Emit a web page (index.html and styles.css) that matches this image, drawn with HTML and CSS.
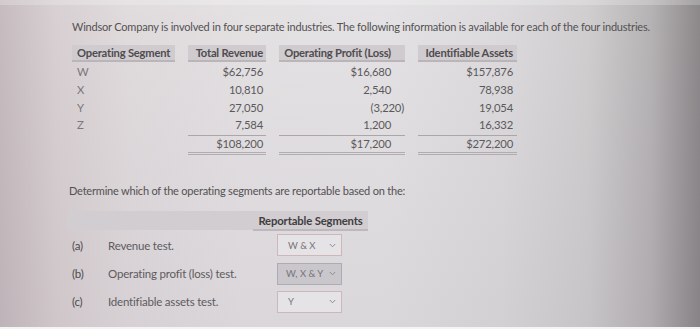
FILE: index.html
```html
<!DOCTYPE html>
<html>
<head>
<meta charset="utf-8">
<link rel="stylesheet" href="styles.css">
</head>
<body>
<div class="page">
  <div class="topstrip"></div>
  <p class="intro">Windsor Company is involved in four separate industries. The following information is available for each of the four industries.</p>

  <div class="data">
    <div class="hd c1 left">Operating Segment</div>
    <div class="hd c2">Total Revenue</div>
    <div class="hd c3">Operating Profit (Loss)</div>
    <div class="hd c4">Identifiable Assets</div>

    <div class="cell c1 left seg">W</div>
    <div class="cell c2">$62,756</div>
    <div class="cell c3">$16,680</div>
    <div class="cell c4">$157,876</div>

    <div class="cell c1 left seg">X</div>
    <div class="cell c2">10,810</div>
    <div class="cell c3">2,540</div>
    <div class="cell c4">78,938</div>

    <div class="cell c1 left seg">Y</div>
    <div class="cell c2">27,050</div>
    <div class="cell c3 neg">(3,220)</div>
    <div class="cell c4">19,054</div>

    <div class="cell c1 left seg">Z</div>
    <div class="cell c2">7,584</div>
    <div class="cell c3">1,200</div>
    <div class="cell c4">16,332</div>

    <div class="cell c1 blank"></div>
    <div class="cell c2 total">$108,200</div>
    <div class="cell c3 total">$17,200</div>
    <div class="cell c4 total">$272,200</div>
  </div>

  <p class="prompt">Determine which of the operating segments are reportable based on the:</p>

  <div class="answers">
    <div class="ahd-left"></div>
    <div class="ahd-right">Reportable Segments</div>

    <div class="q"><span class="lbl">(a)</span><span>Revenue test.</span></div>
    <div class="a"><div class="sel"><span>W &amp; X</span><svg class="chev" width="7" height="5" viewBox="0 0 7 5"><polyline points="0.8,1 3.5,3.8 6.2,1" fill="none" stroke="#8f8c90" stroke-width="1"/></svg></div></div>

    <div class="q"><span class="lbl">(b)</span><span>Operating profit (loss) test.</span></div>
    <div class="a"><div class="sel filled"><span>W, X &amp; Y</span><svg class="chev" width="7" height="5" viewBox="0 0 7 5"><polyline points="0.8,1 3.5,3.8 6.2,1" fill="none" stroke="#8f8c90" stroke-width="1"/></svg></div></div>

    <div class="q"><span class="lbl">(c)</span><span>Identifiable assets test.</span></div>
    <div class="a"><div class="sel"><span>Y</span><svg class="chev" width="7" height="5" viewBox="0 0 7 5"><polyline points="0.8,1 3.5,3.8 6.2,1" fill="none" stroke="#8f8c90" stroke-width="1"/></svg></div></div>
  </div>
</div>
</body>
</html>
```

FILE: styles.css
```css
html, body {
  margin: 0;
  padding: 0;
  height: 329px;
  overflow: hidden;
}
body {
  font-family: Lato, "Open Sans", sans-serif;
  color: #5b595b;
  background:
    linear-gradient(to bottom, rgba(0,0,0,0) 0%, rgba(60,40,70,0.06) 100%),
    linear-gradient(to right, #c6bcbf 0%, #d8d0d2 8%, #e0dbdd 18%, #e4e1e3 35%, #e4e2e4 55%, #dcdadc 72%, #d0cecf 84%, #b6b3b5 93%, #8c888a 100%);
}
.page {
  height: 327px;
  border-bottom: 2px solid #f4f4f4;
}
.topstrip {
  height: 5px;
  background: rgba(255,255,255,0.22);
}
.intro {
  margin: 14px 0 0 72px;
  font-size: 11px;
  line-height: 15px;
  letter-spacing: -0.2px;
  color: #535153;
  white-space: nowrap;
}
.data {
  margin: 11px 0 0 72px;
  display: grid;
  grid-template-columns: 103px 78px 126px 99px;
  grid-template-rows: 18px;
  grid-auto-rows: 17.8px;
  column-gap: 13px;
  font-size: 11.3px;
  width: max-content;
}
.hd {
  height: 15px;
  line-height: 15px;
  background: #d0cbce;
  border-bottom: 2px solid #b9b5b8;
  font-weight: 700;
  color: #4e4c4e;
  text-align: right;
  letter-spacing: -0.2px;
  font-size: 11.2px;
  white-space: nowrap;
}
.cell {
  text-align: right;
  line-height: 17.8px;
  letter-spacing: -0.2px;
}
.left { text-align: left; padding-left: 5px; }
.seg { color: #7a777a; }
.c2 { padding-right: 3px; }
.c3 { padding-right: 14px; }
.c3.neg { padding-right: 1px; }
.c4 { padding-right: 4px; }
.total {
  border-top: 1px solid #aaa6a9;
  border-bottom: 3px double #b0acaf;
  line-height: 16px;
  margin-top: 1px;
  height: 16px;
}
.prompt {
  margin: 31px 0 0 69px;
  font-size: 11px;
  line-height: 15px;
  letter-spacing: -0.2px;
  color: #535153;
}
.answers {
  margin: 13px 0 0 68px;
  display: grid;
  grid-template-columns: 185px 112px;
  grid-template-rows: 20px 28.4px 28.4px 28.4px;
  width: max-content;
  font-size: 11.5px;
}
.ahd-left {
  background: #d2cdd0;
  margin-bottom: 1px;
}
.ahd-right {
  background: #d2cdd0;
  border-bottom: 2px solid #bcb8bb;
  font-weight: 700;
  color: #3f3d40;
  text-align: center;
  height: 18px;
  line-height: 19px;
  font-size: 11.3px;
  letter-spacing: -0.15px;
  white-space: nowrap;
  margin-right: -3px;
}
.q {
  display: flex;
  align-items: center;
  padding-left: 4px;
  color: #5e5b5e;
  letter-spacing: -0.2px;
}
.lbl {
  width: 36px;
  color: #4c4a4c;
}
.a {
  display: flex;
  align-items: center;
  justify-content: center;
}
.sel {
  height: 20px;
  border: 1px solid #cdb7bb;
  background: #e6e3e6;
  display: flex;
  align-items: center;
  justify-content: space-between;
  padding: 0 5px 0 10px;
  width: 48px;
  font-size: 9.5px;
  color: #777478;
  margin-left: 1px;
}
.sel.filled {
  background: #c9c6cc;
  border-color: #aeabb3;
  padding-left: 8px;
  width: 50px;
}
.chev { flex: none; }
```
